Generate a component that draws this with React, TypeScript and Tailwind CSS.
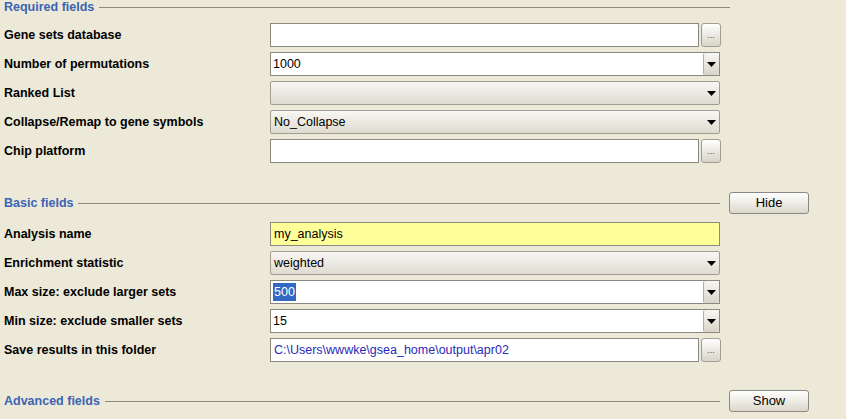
import React from 'react';

type Kind = 'browse' | 'edit' | 'combo' | 'plain';

type Row = {
  label: string;
  kind: Kind;
  value?: string;
  yellow?: boolean;
  selected?: boolean;
  blue?: boolean;
};

const requiredRows: Row[] = [
  { label: 'Gene sets database', kind: 'browse' },
  { label: 'Number of permutations', kind: 'edit', value: '1000' },
  { label: 'Ranked List', kind: 'combo' },
  { label: 'Collapse/Remap to gene symbols', kind: 'combo', value: 'No_Collapse' },
  { label: 'Chip platform', kind: 'browse' },
];

const basicRows: Row[] = [
  { label: 'Analysis name', kind: 'plain', value: 'my_analysis', yellow: true },
  { label: 'Enrichment statistic', kind: 'combo', value: 'weighted' },
  { label: 'Max size: exclude larger sets', kind: 'edit', value: '500', selected: true },
  { label: 'Min size: exclude smaller sets', kind: 'edit', value: '15' },
  { label: 'Save results in this folder', kind: 'browse', value: 'C:\\Users\\wwwke\\gsea_home\\output\\apr02', blue: true },
];

const Arrow = () => (
  <svg width="9" height="5" viewBox="0 0 9 5">
    <path d="M0 0 H9 L4.5 5 Z" fill="#000" />
  </svg>
);

const SectionHeader = ({ title, button }: { title: string; button?: string }) => (
  <div className="flex items-center h-[22px]">
    <div className={`flex items-center ${button ? 'w-[720px]' : 'w-[730px]'}`}>
      <span className="pl-[4px] text-[12.5px] font-bold text-[#3c64b4] whitespace-nowrap">{title}</span>
      <div className="flex-1 h-px bg-[#8a8a80] ml-[5px]" />
    </div>
    {button && (
      <button className="ml-[9px] w-[80px] h-[22px] rounded-[3px] border border-[#8a8a84] bg-gradient-to-b from-white to-[#dcd8cc] text-[13px] text-black">
        {button}
      </button>
    )}
  </div>
);

const Field = ({ row }: { row: Row }) => {
  if (row.kind === 'combo') {
    return (
      <div className="w-[450px] h-[24px] flex items-center rounded-[2px] border border-[#a09e94] bg-gradient-to-b from-[#f8f7f3] to-[#dedbd0]">
        <span className="flex-1 pl-[3px] text-[12.5px] text-black">{row.value}</span>
        <span className="w-[16px] flex justify-center mt-[1px]">
          <Arrow />
        </span>
      </div>
    );
  }
  if (row.kind === 'edit') {
    return (
      <div className="w-[450px] h-[24px] flex border border-[#8a8a80] bg-white">
        <span className="flex-1 flex items-center pl-[2px] text-[12.5px] text-black">
          {row.selected ? <span className="bg-[#316ac5] text-white px-[1px]">{row.value}</span> : row.value}
        </span>
        <span className="w-[16px] flex items-center justify-center border-l border-[#b0ada2] rounded-[2px] bg-gradient-to-b from-[#f8f7f3] to-[#d8d4c8]">
          <Arrow />
        </span>
      </div>
    );
  }
  const box = (
    <div
      className={`${row.kind === 'plain' ? 'w-[450px]' : 'w-[429px]'} h-[24px] flex items-center pl-[3px] border border-[#8a8a80] text-[12.5px] ${
        row.yellow ? 'bg-[#ffff99]' : 'bg-white'
      } ${row.blue ? 'text-[#2a2ab8]' : 'text-black'}`}
    >
      {row.value}
    </div>
  );
  if (row.kind === 'plain') return box;
  return (
    <div className="flex items-center gap-[2px]">
      {box}
      <div className="w-[20px] h-[24px] flex items-center justify-center rounded-[3px] border border-[#a09e94] bg-gradient-to-b from-white to-[#d8d4c8] text-[9px] text-[#444] leading-none">
        ...
      </div>
    </div>
  );
};

const Rows = ({ rows, top }: { rows: Row[]; top: string }) => (
  <div className={`flex flex-col gap-[5px] ${top}`}>
    {rows.map((r) => (
      <div key={r.label} className="flex items-center h-[24px]">
        <span className="w-[270px] pl-[4px] text-[12.5px] font-bold text-black whitespace-nowrap">{r.label}</span>
        <Field row={r} />
      </div>
    ))}
  </div>
);

const App = (): JSX.Element => {
  return (
    <div
      className="w-[846px] h-[419px] bg-[#ece9d8] overflow-hidden"
      style={{ fontFamily: '"Liberation Sans", Arial, sans-serif' }}
    >
      <div className="-mt-[4px]">
        <SectionHeader title="Required fields" />
      </div>
      <Rows rows={requiredRows} top="mt-[5px]" />
      <div className="mt-[29px]">
        <SectionHeader title="Basic fields" button="Hide" />
      </div>
      <Rows rows={basicRows} top="mt-[8px]" />
      <div className="mt-[28px]">
        <SectionHeader title="Advanced fields" button="Show" />
      </div>
    </div>
  );
};

export default App;
